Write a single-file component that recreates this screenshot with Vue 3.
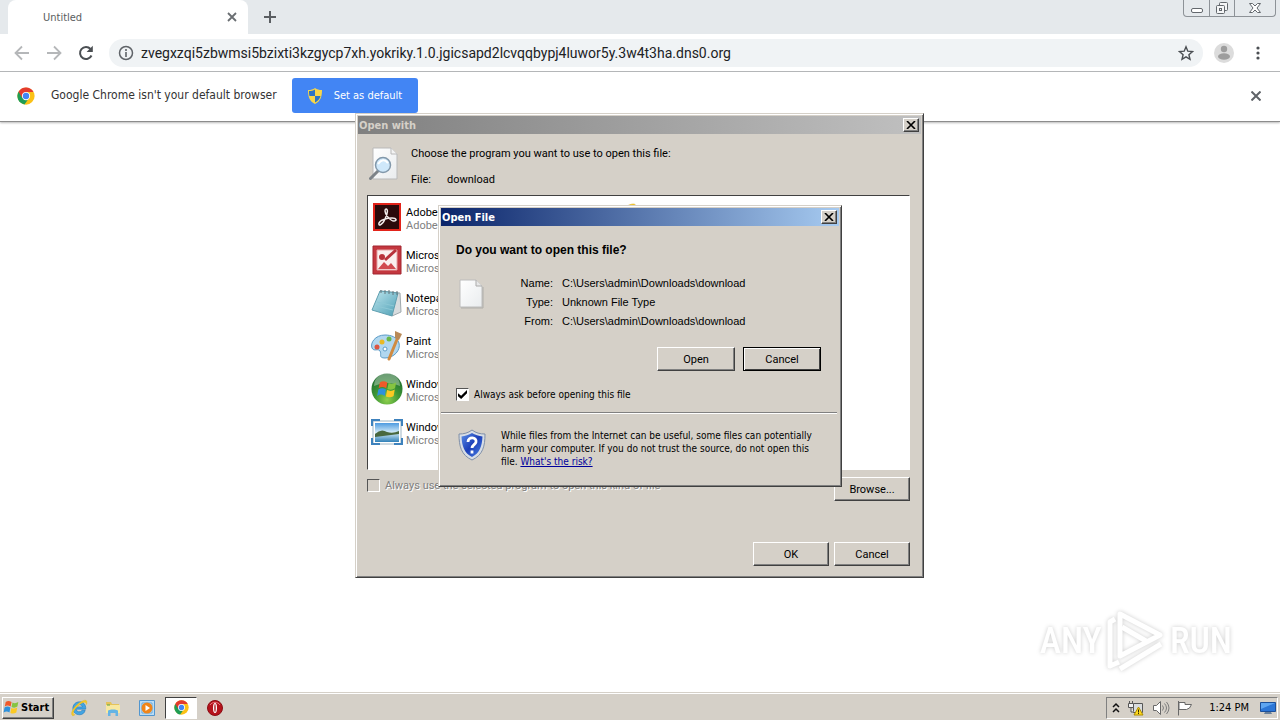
<template>
  <div class="desktop">
    <svg class="defs" aria-hidden="true">
      <defs>
        <linearGradient id="pane" x1="0" y1="0" x2="1" y2="1">
          <stop offset="0" stop-color="#ffffff" />
          <stop offset="1" stop-color="#e9ecee" />
        </linearGradient>
        <linearGradient id="note" x1="0" y1="0" x2="1" y2="1">
          <stop offset="0" stop-color="#bfe6ee" />
          <stop offset="1" stop-color="#4d9fb5" />
        </linearGradient>
        <radialGradient id="orb" cx="0.5" cy="0.85" r="0.8">
          <stop offset="0" stop-color="#8ed04c" />
          <stop offset="0.5" stop-color="#3d9635" />
          <stop offset="1" stop-color="#1f6b2c" />
        </radialGradient>
        <linearGradient id="sky" x1="0" y1="0" x2="0" y2="1">
          <stop offset="0" stop-color="#4d9be0" />
          <stop offset="0.5" stop-color="#d5ecf8" />
          <stop offset="1" stop-color="#2f80b8" />
        </linearGradient>
        <linearGradient id="shield" x1="0" y1="0" x2="1" y2="1">
          <stop offset="0" stop-color="#5b8fe8" />
          <stop offset="0.5" stop-color="#1c3fb8" />
          <stop offset="1" stop-color="#4b83e6" />
        </linearGradient>
        <symbol id="chrome" viewBox="0 0 48 48">
          <circle cx="24" cy="24" r="23" fill="#fbc116" />
          <path d="M24 24 4.1 12.5A23 23 0 0 0 20 46.600L32 29z" fill="#1f9d55" />
          <path d="M4.100 12.500A23 23 0 0 1 44 13H24L14 29z" fill="#e33b2e" />
          <circle cx="24" cy="24" r="11" fill="#fff" />
          <circle cx="24" cy="24" r="8.500" fill="#4285f4" />
        </symbol>
        <symbol id="ie" viewBox="0 0 32 32">
          <path d="M27 20H21.500A6 6 0 0 1 10.500 18H28C28.500 9 23 5 17 5 9 5 5 11 5 17s5 11 12 11c5 0 9-3 10-8zM10.600 14c1-5 11-5 11.400 0z" fill="#42a5e3" stroke="#1c76bb" />
          <path d="M5 30C-1 27 6 14 16 7 23 2 31-1 30 7c0 1 0 2-1 3 0-7-7-4-13 1C8 17 2 27 9 28z" fill="#f5c925" stroke="#dba91a" stroke-width="0.500" />
        </symbol>
        <symbol id="flag" viewBox="0 0 20 18">
          <path d="M3 3C5 1.500 7 1.500 9.500 3L8.500 8C6 6.500 4 6.500 2 8z" fill="#f0592a" />
          <path d="M10.500 3.500c2 1 4 1 6.500-.5L16 8c-2 1.500-4.500 1.500-6.500.5z" fill="#86c440" />
          <path d="M1.700 9C4 7.500 6 7.500 8.200 9l-1 5.500C5 13 3 13 .7 14.500z" fill="#2e91dc" />
          <path d="M9.200 9.500c2.300 1 4.300 1 6.600-.5l-1 5.500c-2.500 1.500-4.500 1.500-6.600.5z" fill="#fbc923" />
        </symbol>
      </defs>
    </svg>

    <header class="tabstrip">
      <div class="tab">
        <span>Untitled</span>
        <button class="plain" aria-label="Close tab">
          <svg width="10" height="10" viewBox="0 0 10 10"><path d="M1 1l8 8M9 1 1 9" stroke="#6a6e72" stroke-width="1.800" /></svg>
        </button>
      </div>
      <button class="plain new-tab" aria-label="New tab">
        <svg width="12" height="12" viewBox="0 0 12 12"><path d="M6 0v12M0 6h12" stroke="#5a5e62" stroke-width="2" /></svg>
      </button>
      <div class="frame-buttons">
        <button aria-label="Minimize">
          <svg width="14" height="14" viewBox="0 0 14 14"><rect x="1.500" y="7.500" width="11" height="4" rx="1.500" fill="#fff" stroke="#63686d" /></svg>
        </button>
        <button aria-label="Restore">
          <svg width="14" height="14" viewBox="0 0 14 14"><g fill="#f5f6f7" stroke="#63686d"><rect x="4.500" y="1.500" width="8" height="8" rx="1" /><rect x="1.500" y="4.500" width="8" height="8" rx="1" /><rect x="4.500" y="7.500" width="2" height="2" /></g></svg>
        </button>
        <button class="wide" aria-label="Close">
          <svg width="14" height="14" viewBox="0 0 14 14"><path d="M1.500 2.500h3L7 5l2.500-2.500h3L9 7l3.500 4.500h-3L7 9l-2.500 2.500h-3L5 7z" fill="#fff" stroke="#63686d" /></svg>
        </button>
      </div>
    </header>

    <nav class="toolbar">
      <button class="plain" aria-label="Back">
        <svg width="16" height="16" viewBox="0 0 16 16"><path d="M15 8H2M8 1.500 1.500 8 8 14.500" fill="none" stroke="#b5b7b9" stroke-width="1.800" /></svg>
      </button>
      <button class="plain" aria-label="Forward">
        <svg width="16" height="16" viewBox="0 0 16 16"><path d="M1 8h13M8 1.500 14.500 8 8 14.500" fill="none" stroke="#b5b7b9" stroke-width="1.800" /></svg>
      </button>
      <button class="plain" aria-label="Reload">
        <svg width="16" height="16" viewBox="0 0 16 16"><path d="M13.500 10.500A6 6 0 1 1 12.500 4" fill="none" stroke="#4b4f53" stroke-width="2" /><path d="M14.800 0.800V7H8.600z" fill="#4b4f53" /></svg>
      </button>
      <div class="omnibox">
        <svg width="16" height="16" viewBox="0 0 16 16"><circle cx="8" cy="8" r="6.500" fill="none" stroke="#5f6368" stroke-width="1.500" /><path d="M8 7v5M8 4v2" stroke="#5f6368" stroke-width="1.600" /></svg>
        <input v-model="url" type="text" aria-label="Address" spellcheck="false" />
        <button class="plain" aria-label="Bookmark">
          <svg width="16" height="16" viewBox="0 0 16 16"><path d="M8 1.800l1.800 4.400 4.700.4-3.600 3.100 1.100 4.600-4-2.500-4 2.500 1.100-4.600L1.500 6.600l4.700-.4z" fill="none" stroke="#4b4f53" stroke-width="1.400" /></svg>
        </button>
      </div>
      <button class="plain" aria-label="Profile">
        <svg width="20" height="20" viewBox="0 0 20 20"><circle cx="10" cy="10" r="10" fill="#dcdcdc" /><circle cx="10" cy="6" r="3.200" fill="#9d9d9d" /><ellipse cx="10" cy="13.500" rx="6" ry="3.200" fill="#9d9d9d" /></svg>
      </button>
      <button class="plain" aria-label="Menu">
        <svg width="16" height="16" viewBox="0 0 16 16"><g fill="#4b4f53"><circle cx="8" cy="3" r="1.600" /><circle cx="8" cy="8" r="1.600" /><circle cx="8" cy="13" r="1.600" /></g></svg>
      </button>
    </nav>

    <section class="infobar">
      <svg width="18" height="18"><use href="#chrome" /></svg>
      <span class="message">Google Chrome isn't your default browser</span>
      <button class="set-default">
        <svg width="14" height="16" viewBox="0 0 14 16">
          <path d="M7 0c2 1.500 4 2 7 2 0 6-1 11-7 14C1 13 0 8 0 2c3 0 5-.5 7-2z" fill="#f7d64a" />
          <path d="M7 1.500V8H1.500C1 6 1 5 1 3c2.500 0 4-.5 6-1.500zM7 8h5.500c-.7 3-2.500 5-5.500 6.500z" fill="#2d74c4" />
        </svg>
        Set as default
      </button>
      <button class="plain dismiss" aria-label="Dismiss">
        <svg width="10" height="10" viewBox="0 0 10 10"><path d="M0.500.5l9 9M9.500.5l-9 9" stroke="#5f6368" stroke-width="2" /></svg>
      </button>
    </section>

    <main class="page">
      <div class="watermark">
        <span>ANY</span>
        <svg width="58" height="62" viewBox="0 0 58 62">
          <g fill="none" stroke="#fff" stroke-width="5" stroke-linejoin="round">
            <path d="M13 4v42l40-21z" />
            <path d="M8 9 3 12v44l9-4" />
            <path d="M13 59l41-25M15 17l24 14" />
          </g>
        </svg>
        <span>RUN</span>
      </div>
    </main>

    <footer class="taskbar">
      <button class="raised start"><svg width="18" height="17"><use href="#flag" /></svg>Start</button>
      <button class="plain task" aria-label="Internet Explorer"><svg width="18" height="18"><use href="#ie" /></svg></button>
      <button class="plain task" aria-label="Explorer">
        <svg width="16" height="16" viewBox="0 0 16 16"><path d="M1 2h5l1 2h7v8H1z" fill="#e5c35a" /><path d="M1 5h14v8H1z" fill="#f8e8a0" /><path d="M3 16V11c0-2 10-2 10 0v5h-2.500v-3h-5v3z" fill="#64b4e4" /><path d="M2 5h3" stroke="#56a44b" /></svg>
      </button>
      <button class="plain task" aria-label="Media Player">
        <svg width="16" height="16" viewBox="0 0 16 16"><path d="M.5.500h15v15H.5z" fill="#b9dcf6" stroke="#5296cf" /><path d="M3 3h10v10H3z" fill="#d9efff" stroke="#69a7d6" /><circle cx="8" cy="8" r="5.500" fill="#f08519" /><path d="M6.500 5v6L11 8z" fill="#fff" /></svg>
      </button>
      <button class="task active" aria-label="Google Chrome"><svg width="15" height="15"><use href="#chrome" /></svg></button>
      <button class="plain task" aria-label="Opera">
        <svg width="16" height="16" viewBox="0 0 16 16"><circle cx="8" cy="8" r="7.500" fill="#b5121b" stroke="#8b0d14" /><path d="M3 5a6 6 0 0 1 10 0" stroke="#e8747a" fill="none" /><ellipse cx="8" cy="8" rx="2" ry="5" fill="#fff" /><ellipse cx="8" cy="8" rx="0.700" ry="4" fill="#a5141c" /></svg>
      </button>
      <div class="tray">
        <svg width="8" height="12" viewBox="0 0 8 12"><path d="M1 5l3-3 3 3M1 10l3-3 3 3" fill="none" stroke="#111" stroke-width="1.500" /></svg>
        <svg width="18" height="16" viewBox="0 0 18 16"><path d="M6.500 3.500h9v9h-9z" fill="#d9dcde" stroke="#565656" /><path d="M1.500 3.500h5v4h-5zM2.500 1v2M5.500 1v2M4 8v4h3" fill="#f0f0f0" stroke="#565656" /><path d="M11.500 7 16 15H7z" fill="#ffd91f" stroke="#ad8c00" /><path d="M11.500 9.500v3M11.500 13v1" stroke="#332b00" /></svg>
        <svg width="18" height="16" viewBox="0 0 18 16"><path d="M1.500 5.500h3l4-4v13l-4-4h-3z" fill="#fff" stroke="#686868" /><path d="M10.500 5.500q2 2.500 0 5M12.500 3.500q4 4.500 0 9M14.500 2q5 6 0 12" fill="none" stroke="#7c7c7c" /></svg>
        <svg width="16" height="16" viewBox="0 0 16 16"><path d="M1.500 1v14.500M2 2.500h6v2h6.500L12.500 8l-3 1.500H2z" fill="#fff" stroke="#686868" /></svg>
        <time>1:24 PM</time>
        <svg width="16" height="16" viewBox="0 0 16 16"><path d="M.5 2.500h15v9H.5z" fill="#2c76d6" stroke="#1c4f99" /><path d="M1 3h14L1 9z" fill="#5ea5f1" /><path d="M5 12h6l1 2H4z" fill="#6a8099" /></svg>
      </div>
    </footer>

    <section class="window open-with" role="dialog" aria-label="Open with">
      <div class="titlebar inactive">
        <h2>Open with</h2>
        <button class="raised close" aria-label="Close"><svg width="10" height="8" viewBox="0 0 10 8"><path d="M1 0l8 8M9 0 1 8" stroke="#000" stroke-width="1.600" /></svg></button>
      </div>
      <div class="ow-body">
        <div class="ow-head">
          <svg width="30" height="34" viewBox="0 0 30 34">
            <path d="M4 1h18l6 6v25H4z" fill="url(#pane)" stroke="#b9b9b9" />
            <path d="M22 1v6h6" fill="#f3f3f3" stroke="#b9b9b9" />
            <path d="M1.500 31.500 9 24" stroke="#7d8388" stroke-width="3" stroke-linecap="round" />
            <circle cx="14" cy="18" r="7.500" fill="#cfe8fa" stroke="#8298aa" stroke-width="1.500" />
            <path d="M9 17q5-7 10-1" stroke="#fff" stroke-width="2" fill="none" />
          </svg>
          <div>
            <p>Choose the program you want to use to open this file:</p>
            <p><span class="file-label">File:</span>download</p>
          </div>
        </div>
        <ul class="programs">
          <li v-for="program in programs" :key="program.icon">
            <svg v-if="program.icon === 'adobe'" width="30" height="30" viewBox="0 0 30 30"><path d="M1 1h28v28H1z" fill="#e2231a" /><path d="M3 3h24v24H3z" fill="#2b0a0b" /><path d="M14 7c2 0 2 4-1 10-3 7-7 7-6 4 1-3 8-5 13-5s5 3 2 3c-4 0-9-7-9-10 0-1 0-2 1-2z" fill="none" stroke="#f4eded" stroke-width="1.500" /></svg>
            <svg v-else-if="program.icon === 'office'" width="30" height="30" viewBox="0 0 30 30"><path d="M1 1h28v28H1z" fill="#c4373f" stroke="#a22630" /><path d="M5 5h20v20H5z" fill="#faf0ef" stroke="#e5a4a5" /><path d="M6 24l6-7 4 4 3-3 5 6z" fill="#d14b50" /><circle cx="10" cy="12" r="3" fill="#b8323b" /><path d="M13 15 24 5" stroke="#b8323b" stroke-width="3" /></svg>
            <svg v-else-if="program.icon === 'notepad'" width="32" height="30" viewBox="0 0 32 30"><path d="M9 3l20 2 1 19-9 4z" fill="#d8dcde" stroke="#a0a9ad" /><path d="M9 3l18 2-6 23L1 22z" fill="url(#note)" stroke="#5f9fb0" /><path d="M6 14l17 4M5 18l17 4" stroke="#8dc8d6" /><path d="M10 2v3M14 2v4M18 2v4M22 3v4M26 3v4" stroke="#65757b" /></svg>
            <svg v-else-if="program.icon === 'paint'" width="32" height="30" viewBox="0 0 32 30"><path d="M14 4C4 4-1 12 1 17c2 4 6 0 8 3s-2 7 5 7c9 0 16-8 14-15-2-6-8-8-14-8z" fill="#b1d7ef" stroke="#5b9bc6" /><circle cx="6" cy="16" r="2.500" fill="#dc5541" /><circle cx="11" cy="11" r="2.500" fill="#e9b923" /><circle cx="18" cy="8" r="2.500" fill="#69b747" /><circle cx="14" cy="18" r="2" fill="#fff" stroke="#5b9bc6" /><path d="M27 6 18 28" stroke="#d08b42" stroke-width="3" stroke-linecap="round" /><path d="M24 0l7 3-3 6-4-2z" fill="#b98a58" /></svg>
            <svg v-else-if="program.icon === 'center'" width="32" height="32" viewBox="0 0 32 32"><circle cx="16" cy="16" r="15.500" fill="url(#orb)" /><path d="M3 13A13 13 0 0 1 29 13q-13-6-26 0z" fill="#fff" opacity="0.350" /><svg x="5" y="6" width="24" height="21"><use href="#flag" /></svg></svg>
            <svg v-else-if="program.icon === 'photo'" width="32" height="30" viewBox="0 0 32 30"><path d="M2 4h28v23H2z" fill="#fff" stroke="#9db4c2" /><path d="M4 6h24v19H4z" fill="url(#sky)" /><path d="M4 17q6-6 12-2 6 2 12-1v3L4 20z" fill="#49683f" /><path d="M1 9V3h8M23 3h8v6M31 21v6h-8M9 27H1v-6" fill="none" stroke="#3e82bd" stroke-width="2" /></svg>
            <svg v-else width="32" height="30" viewBox="0 0 32 30"><use href="#ie" /></svg>
            <div>
              <strong>{{ program.name }}</strong>
              <small>{{ program.vendor }}</small>
            </div>
          </li>
        </ul>
        <div class="ow-options">
          <label class="check disabled"><input type="checkbox" disabled />Always use the selected program to open this kind of file</label>
          <button class="raised">Browse...</button>
        </div>
        <div class="ow-actions">
          <button class="raised">OK</button>
          <button class="raised">Cancel</button>
        </div>
      </div>
    </section>

    <section class="window open-file" role="dialog" aria-label="Open File">
      <div class="titlebar">
        <h2>Open File</h2>
        <button class="raised close" aria-label="Close"><svg width="10" height="8" viewBox="0 0 10 8"><path d="M1 0l8 8M9 0 1 8" stroke="#000" stroke-width="1.600" /></svg></button>
      </div>
      <div class="of-body">
        <h3>Do you want to open this file?</h3>
        <div class="of-info">
          <svg width="26" height="30" viewBox="0 0 26 30"><path d="M1 1h16l6 6v21H1z" fill="url(#pane)" stroke="#bcbcbc" /><path d="M17 1v6h6" fill="#e8e8e8" stroke="#aaa" /><path d="M2 29h22V8" fill="none" stroke="#999" opacity="0.600" /></svg>
          <dl>
            <template v-for="row in details" :key="row.label">
              <dt>{{ row.label }}</dt>
              <dd>{{ row.value }}</dd>
            </template>
          </dl>
        </div>
        <div class="of-actions">
          <button class="raised">Open</button>
          <button class="raised default">Cancel</button>
        </div>
        <label class="check"><input v-model="alwaysAsk" type="checkbox" />Always ask before opening this file</label>
      </div>
      <div class="of-warning">
        <svg width="28" height="32" viewBox="0 0 28 32">
          <path d="M14 1c4 3 8 4 13 4 0 12-2 21-13 26C3 26 1 17 1 5c5 0 9-1 13-4z" fill="#d7dde5" stroke="#7f8fa8" />
          <path d="M14 4c3 2 7 3 10.500 3.500C24 17 22 24 14 28 6 24 4 17 3.500 7.500 7 7 11 6 14 4z" fill="url(#shield)" />
          <path d="M10 13c0-6 9-5 8 0-.5 2.500-4 3-4 6M14 21.500v3" fill="none" stroke="#fff" stroke-width="2.800" />
        </svg>
        <p>While files from the Internet can be useful, some files can potentially harm your computer. If you do not trust the source, do not open this file. <a href="#">What's the risk?</a></p>
      </div>
    </section>
  </div>
</template>

<script setup>
import { ref } from 'vue';

const url = ref('zvegxzqi5zbwmsi5bzixti3kzgycp7xh.yokriky.1.0.jgicsapd2lcvqqbypj4luwor5y.3w4t3ha.dns0.org');
const alwaysAsk = ref(true);

const programs = [
  { icon: 'adobe', name: 'Adobe Acrobat Reader DC', vendor: 'Adobe Systems Incorporated' },
  { icon: 'office', name: 'Microsoft Office', vendor: 'Microsoft Corporation' },
  { icon: 'notepad', name: 'Notepad', vendor: 'Microsoft Corporation' },
  { icon: 'paint', name: 'Paint', vendor: 'Microsoft Corporation' },
  { icon: 'center', name: 'Windows Media Center', vendor: 'Microsoft Corporation' },
  { icon: 'photo', name: 'Windows Photo Viewer', vendor: 'Microsoft Corporation' },
  { icon: 'explorer', name: 'Internet Explorer', vendor: 'Microsoft Corporation' },
];

const details = [
  { label: 'Name:', value: 'C:\\Users\\admin\\Downloads\\download' },
  { label: 'Type:', value: 'Unknown File Type' },
  { label: 'From:', value: 'C:\\Users\\admin\\Downloads\\download' },
];
</script>

<style>
body {
  margin: 0;
}
</style>

<style scoped>
.desktop {
  position: relative;
  display: flex;
  flex-direction: column;
  min-height: 100vh;
  overflow: hidden;
  background: #fff;
  color: #000;
  font-family: 'DejaVu Sans Condensed', 'DejaVu Sans', sans-serif;
  font-size: 11px;
  line-height: 13px;
}

.desktop * {
  box-sizing: border-box;
}

.defs {
  position: absolute;
  width: 0;
  height: 0;
}

svg {
  display: block;
  flex: none;
}

h2,
h3,
p,
ul,
dl,
dd {
  margin: 0;
  padding: 0;
}

button {
  display: flex;
  align-items: center;
  justify-content: center;
  padding: 0;
  border: 0;
  font: inherit;
  color: inherit;
}

.plain {
  background: none;
}

.tabstrip {
  display: flex;
  align-items: center;
  height: 34px;
  padding-left: 8px;
  background: #e5e9ec;
}

.tab {
  display: flex;
  align-items: center;
  justify-content: space-between;
  width: 240px;
  height: 34px;
  padding: 0 11px 0 35px;
  border-radius: 8px 8px 0 0;
  background: #fff;
  color: #5a5d60;
}

.new-tab {
  margin-left: 16px;
}

.frame-buttons {
  display: flex;
  align-self: flex-start;
  margin: 0 4px 0 auto;
  border: 1px solid #8d9297;
  border-top: 0;
  border-radius: 0 0 4px 4px;
}

.frame-buttons button {
  width: 25px;
  height: 16px;
  background: none;
}

.frame-buttons button + button {
  border-left: 1px solid #8d9297;
}

.frame-buttons .wide {
  width: 41px;
}

.toolbar {
  display: flex;
  align-items: center;
  gap: 16px;
  height: 38px;
  padding: 0 14px;
  border-bottom: 1px solid #b4b6b8;
}

.omnibox {
  display: flex;
  flex: 1;
  align-items: center;
  height: 28px;
  margin-right: -5px;
  margin-left: -1px;
  padding: 0 9px;
  border-radius: 14px;
  background: #f0f3f5;
}

.omnibox input {
  flex: 1;
  padding: 0 7px;
  border: 0;
  outline: 0;
  background: none;
  color: #202124;
  font-family: Roboto, sans-serif;
  font-size: 14px;
}

.infobar {
  display: flex;
  align-items: center;
  height: 50px;
  padding: 0 19px 2px 17px;
  border-bottom: 1px solid #8c8c8c;
  box-shadow: 0 1px 2px #bbb;
}

.message {
  margin: 0 15px 0 16px;
  color: #333;
  font-size: 12px;
}

.set-default {
  gap: 12px;
  height: 35px;
  padding: 0 16px;
  border-radius: 3px;
  background: #4285f4;
  color: #fff;
}

.dismiss {
  margin-left: auto;
}

.page {
  display: flex;
  flex: 1;
  align-items: flex-end;
  justify-content: flex-end;
  padding: 0 48px 20px;
}

.watermark {
  display: flex;
  align-items: center;
  gap: 5px;
  color: #fff;
  font-family: 'Roboto Condensed', Roboto, sans-serif;
  font-size: 36px;
  font-weight: 500;
  line-height: 48px;
  filter: drop-shadow(0 0 2px #ccc);
}

.taskbar {
  display: flex;
  align-items: center;
  height: 28px;
  padding: 3px 2px 1px;
  border-top: 1px solid #d5d0c8;
  background: #d5d0c8;
  box-shadow: inset 0 1px #fff;
}

.raised {
  border: 1px solid;
  border-color: #fff #404040 #404040 #fff;
  background: #d5d0c8;
  box-shadow: inset -1px -1px #808080;
}

.start {
  justify-content: flex-start;
  width: 52px;
  height: 22px;
  margin-right: 8px;
  font-weight: bold;
}

.task {
  width: 34px;
  height: 22px;
}

.active {
  width: 32px;
  margin: 0 1px;
  border: 1px solid;
  border-color: #404040 #fff #fff #404040;
  background: #fff;
}

.tray {
  display: flex;
  align-items: center;
  gap: 7px;
  height: 22px;
  margin-left: auto;
  padding: 0 1px 0 5px;
  border: 1px solid;
  border-color: #808080 #fff #fff #808080;
}

.tray time {
  margin: 0 4px 0 9px;
}

.window {
  position: absolute;
  padding: 1px;
  border: 1px solid;
  border-color: #d5d0c8 #404040 #404040 #d5d0c8;
  background: #d5d0c8;
  box-shadow: inset 1px 1px #fff, inset -1px -1px #808080;
}

.open-with {
  top: 113px;
  left: calc(50% - 285px);
  width: 569px;
  font-family: Roboto, sans-serif;
}

.open-file {
  top: 205px;
  left: calc(50% - 202px);
  width: 404px;
  font-size: 10px;
}

.titlebar {
  display: flex;
  align-items: center;
  justify-content: space-between;
  height: 18px;
  margin: 1px;
  padding: 0 2px 0 1px;
  background: linear-gradient(90deg, #0a246a, #a6caf0);
  color: #fff;
}

.titlebar.inactive {
  background: linear-gradient(90deg, #808080, #c0c0c0);
  color: #d5d0c8;
}

.titlebar h2 {
  font-family: 'DejaVu Sans Condensed', 'DejaVu Sans', sans-serif;
  font-size: 11px;
}

.close {
  width: 16px;
  height: 14px;
}

.ow-body {
  padding: 12px 12px 10px 10px;
}

.ow-head {
  display: flex;
  gap: 12px;
  height: 48px;
}

.ow-head svg {
  margin-left: 2px;
}

.ow-head p {
  margin-bottom: 13px;
}

.file-label {
  display: inline-block;
  width: 36px;
}

.programs {
  display: grid;
  grid-template-rows: repeat(6, 43px);
  grid-auto-flow: column;
  grid-auto-columns: 236px;
  height: 275px;
  border: 1px solid;
  border-color: #404040 #fff #fff #404040;
  padding: 1px 1px 14px 3px;
  background: #fff;
  list-style: none;
}

.programs li {
  display: flex;
  align-items: center;
  gap: 3px;
}

.programs li > svg {
  width: 32px;
  margin-bottom: 4px;
}

.programs strong,
.programs small {
  display: block;
  font-size: 11px;
  font-weight: normal;
}

.programs small {
  color: #808080;
}

.check {
  display: flex;
  align-items: center;
  gap: 5px;
}

.check input {
  position: relative;
  width: 13px;
  height: 13px;
  margin: 0;
  border: 1px solid;
  border-color: #555 #fff #fff #555;
  appearance: none;
  background: #fff;
}

.check input:checked::after {
  position: absolute;
  inset: 1px;
  background: #000;
  clip-path: polygon(0 35%, 35% 65%, 100% 0, 100% 35%, 35% 100%, 0 70%);
  content: '';
}

.disabled {
  color: #808080;
  text-shadow: 1px 1px #fff;
}

.check.disabled input {
  background: #d5d0c8;
}

.ow-options {
  display: flex;
  align-items: flex-start;
  justify-content: space-between;
  padding-top: 7px;
}

.ow-options .check {
  padding-top: 2px;
}

.ow-options .raised,
.ow-actions .raised {
  width: 76px;
  height: 24px;
}

.ow-actions {
  display: flex;
  gap: 5px;
  justify-content: flex-end;
  margin-top: 41px;
}

.of-body {
  padding: 16px 19px 11px 16px;
}

.of-body h3 {
  font-family: 'Liberation Sans', Arial, sans-serif;
  font-size: 12px;
  line-height: 14px;
}

.of-info {
  display: flex;
  margin-top: 17px;
}

.of-info svg {
  margin: 5px 0 0 3px;
}

.of-info dl {
  display: grid;
  grid-template-columns: 68px auto;
  column-gap: 9px;
  font-family: 'Liberation Sans', Arial, sans-serif;
  font-size: 11px;
  line-height: 19px;
}

.of-info dt {
  text-align: right;
}

.of-actions {
  display: flex;
  gap: 8px;
  justify-content: flex-end;
  margin: 16px 0 17px;
}

.of-actions .raised {
  width: 78px;
  height: 24px;
  font-family: Roboto, sans-serif;
  font-size: 11px;
}

.of-actions .default {
  border-color: #000;
  box-shadow: inset 1px 1px #fff, inset -1px -1px #404040;
}

.of-warning {
  display: flex;
  gap: 15px;
  align-items: flex-start;
  margin: 0 3px 0 1px;
  padding: 16px 15px 17px 17px;
  border-top: 1px solid #808080;
  box-shadow: inset 0 1px #fff;
}

.of-warning a {
  color: #00009c;
}
</style>
